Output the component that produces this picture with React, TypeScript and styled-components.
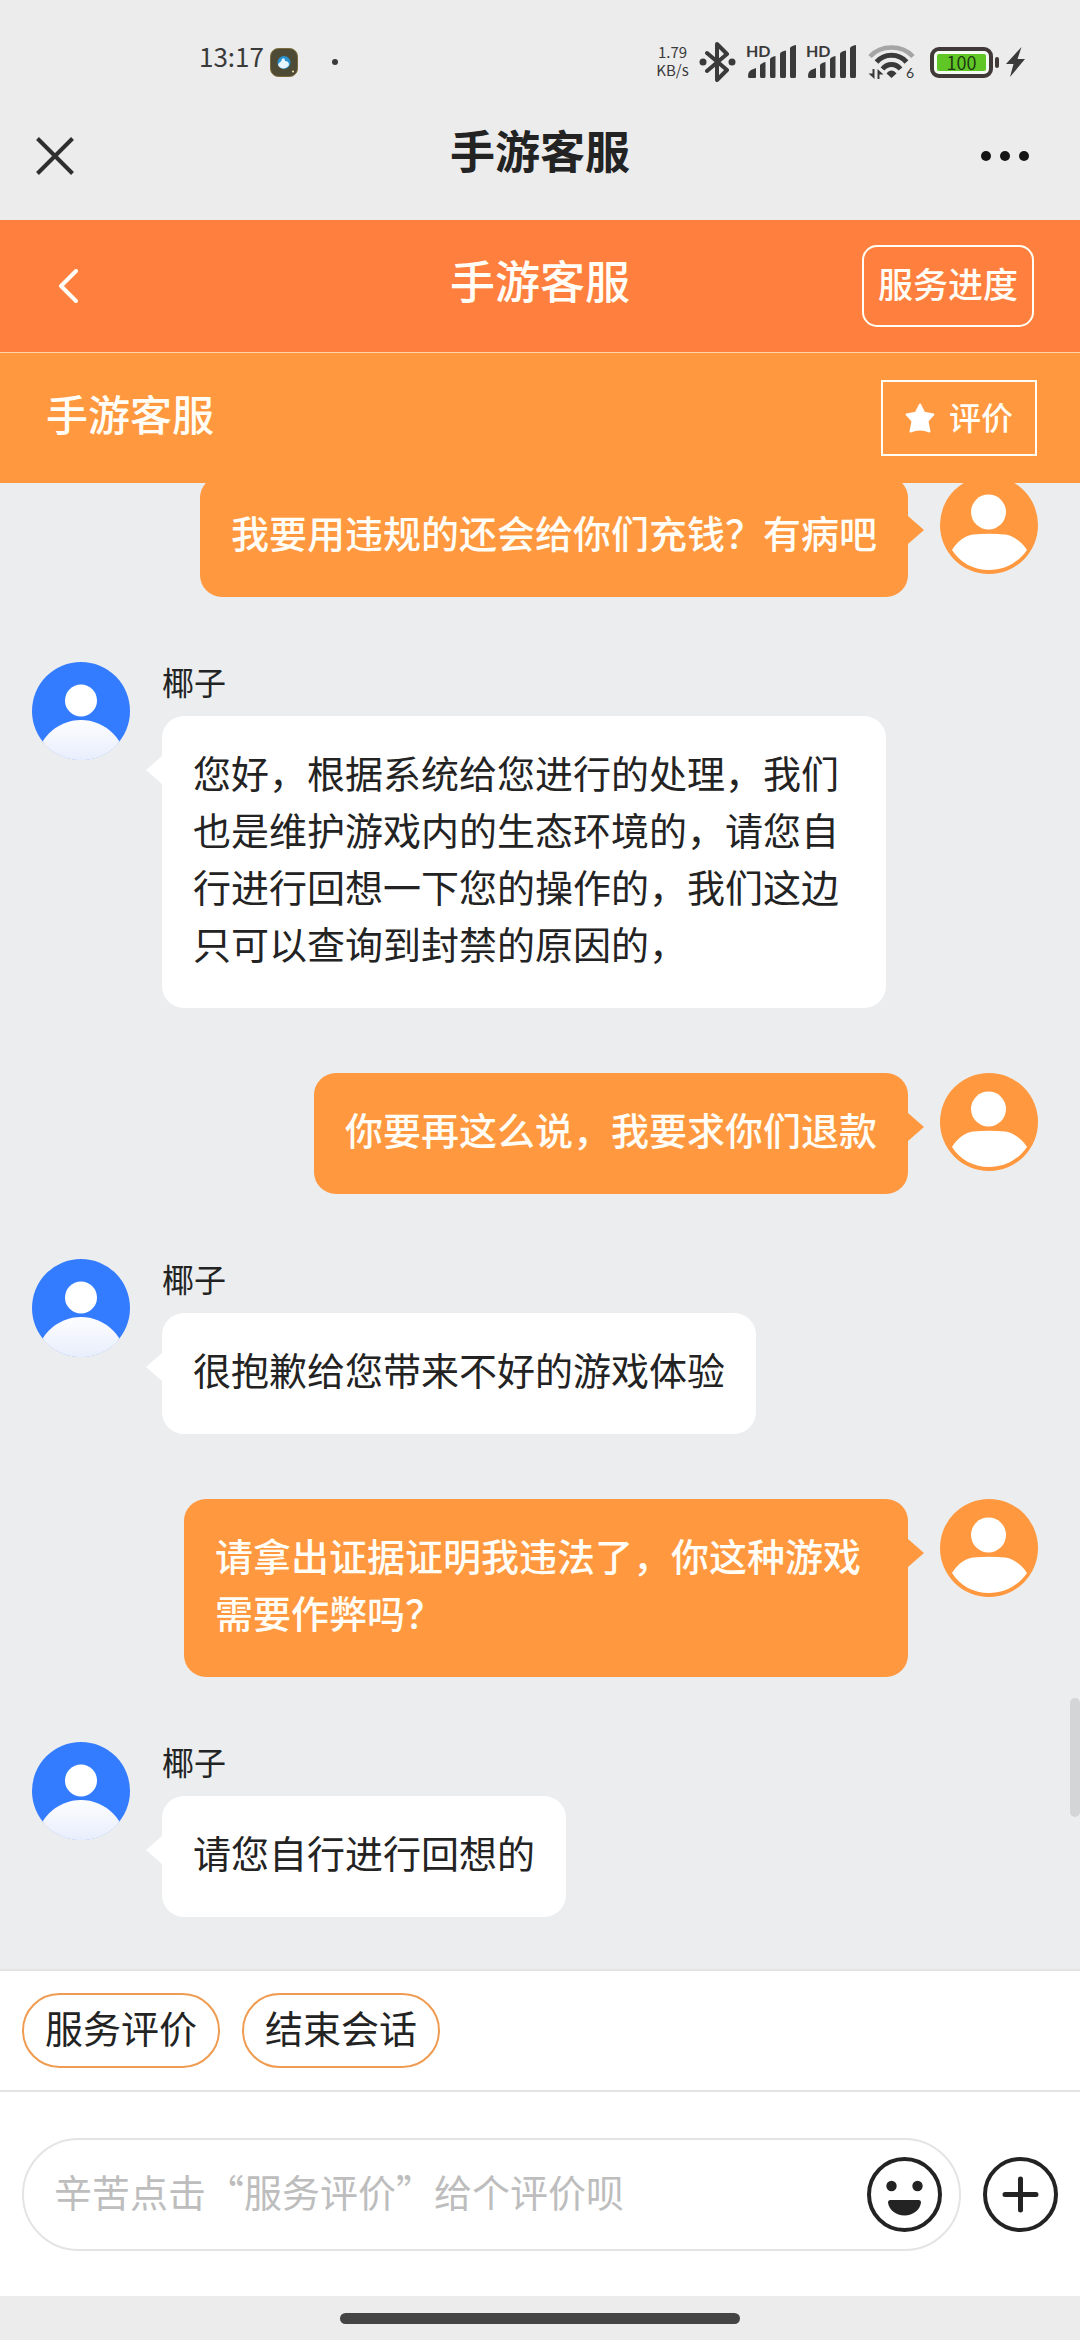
import React from "react";
import styled, { createGlobalStyle } from "styled-components";

const color = {
  system: "#ececec",
  ink: "#232323",
  coral: "#ff803e",
  orange: "#ff983e",
  cream: "#fffdf5",
  chat: "#ebedef",
  line: "#e4e4e4",
  blue: "#337cff",
};

const GlobalStyle = createGlobalStyle`
  *, *::before, *::after { box-sizing: border-box; }
  body {
    margin: 0;
    background: ${color.system};
    color: ${color.ink};
    font-family: "Noto Sans CJK SC", "Noto Sans", sans-serif;
  }
  button, input { font: inherit; color: inherit; }
  svg { display: block; }
`;

const Page = styled.div`
  display: flex;
  flex-direction: column;
  height: 100vh;
`;

/* ---------- system status bar ---------- */

const StatusBar = styled.div`
  display: flex;
  flex: none;
  justify-content: space-between;
  height: 91px;
  padding: 33px 55px 0 199px;
  color: #3a3a3a;
`;

const StatusGroup = styled.div`
  display: flex;
  align-items: center;
  gap: 10px;
`;

const Clock = styled.time`
  width: 61px;
  margin-bottom: 12px;
  font-size: 26px;
  line-height: 46px;
  font-weight: 400;
`;

const Dot = styled.span`
  width: 6px;
  height: 6px;
  margin-left: 24px;
  border-radius: 50%;
  background: currentColor;
`;

const Speed = styled.div`
  width: 33px;
  margin-bottom: 2px;
  font-size: 15px;
  line-height: 18px;
  text-align: center;
`;

const Power = styled.div`
  display: flex;
  align-items: center;
  gap: 7px;
`;

const Battery = styled.div`
  display: flex;
  align-items: center;
  gap: 2px;

  &::after {
    content: "";
    width: 4px;
    height: 11px;
    border-radius: 2px;
    background: #413838;
  }
`;

const BatteryShell = styled.div`
  width: 63px;
  height: 31px;
  padding: 3px;
  border: 4px solid #413838;
  border-radius: 9px;
  background: #f4fbf0;
`;

const BatteryFill = styled.div`
  height: 100%;
  border-radius: 2px;
  background: #5fc626;
  color: #1f3a12;
  font-size: 18px;
  line-height: 16px;
  text-align: center;
`;

/* ---------- headers ---------- */

const BareButton = styled.button<{ $width: number }>`
  display: grid;
  place-items: center;
  flex: none;
  width: ${(p) => p.$width}px;
  height: 75px;
  padding: 0;
  border: 0;
  background: none;
  cursor: pointer;
`;

const Bar = styled.header`
  display: grid;
  flex: none;
  grid-template-columns: 1fr auto 1fr;
  align-items: center;

  & > :last-child { justify-self: end; }
`;

const WindowBar = styled(Bar)`
  height: 129px;
  padding: 0 32px;
`;

const ServiceBar = styled(Bar)`
  height: 133px;
  padding: 0 46px;
  border-bottom: 1px solid #ffd3a6;
  background: ${color.coral};
  color: ${color.cream};
`;

const Title = styled.h1<{ $bold?: boolean }>`
  margin: 0;
  padding-bottom: 12px;
  font-size: 45px;
  line-height: 60px;
  font-weight: ${(p) => (p.$bold ? 700 : 500)};
`;

const ProgressButton = styled.button`
  height: 82px;
  padding: 0 14px 6px;
  border: 2px solid ${color.cream};
  border-radius: 15px;
  background: none;
  font-size: 35px;
  line-height: 50px;
  font-weight: 500;
  cursor: pointer;
`;

const QueueBar = styled.div`
  display: flex;
  flex: none;
  align-items: center;
  justify-content: space-between;
  height: 130px;
  padding: 0 43px 0 46px;
  background: ${color.orange};
  color: ${color.cream};
`;

const QueueName = styled.h2`
  margin: 0;
  padding-bottom: 10px;
  font-size: 42px;
  line-height: 60px;
  font-weight: 500;
`;

const RateButton = styled.button`
  display: flex;
  align-items: center;
  gap: 14px;
  height: 76px;
  padding: 0 22px;
  border: 2px solid ${color.cream};
  background: none;
  font-size: 32px;
  line-height: 46px;
  font-weight: 500;
  cursor: pointer;
`;

const RateLabel = styled.span`
  padding-bottom: 4px;
`;

/* ---------- conversation ---------- */

const ChatPane = styled.main`
  position: relative;
  flex: 1;
  min-height: 0;
  background: ${color.chat};
`;

const ChatScroll = styled.div`
  display: flex;
  flex-direction: column-reverse;
  height: 100%;
  overflow-y: auto;
  scrollbar-width: none;
`;

const ScrollThumb = styled.div`
  position: absolute;
  right: 0;
  bottom: 152px;
  width: 10px;
  height: 119px;
  border-radius: 5px;
  background: #d3d5d7;
`;

const MessageList = styled.ul`
  display: flex;
  flex: none;
  flex-direction: column;
  gap: 65px;
  margin: 0;
  padding: 0 42px 52px 32px;
  list-style: none;
`;

const MessageRow = styled.li<{ $mine: boolean }>`
  display: flex;
  flex-direction: ${(p) => (p.$mine ? "row-reverse" : "row")};
  align-items: flex-start;
  gap: 32px;
`;

const Sender = styled.div`
  margin-bottom: 16px;
  font-size: 32px;
  line-height: 38px;
`;

const Bubble = styled.p<{ $mine: boolean }>`
  position: relative;
  max-width: 724px;
  margin: 0;
  padding: 27px 31px 37px;
  border-radius: 22px;
  background: ${(p) => (p.$mine ? color.orange : "#fff")};
  color: ${(p) => (p.$mine ? color.cream : color.ink)};
  font-size: 38px;
  line-height: 57px;
  font-weight: ${(p) => (p.$mine ? 500 : 400)};

  &::before {
    content: "";
    position: absolute;
    top: 40px;
    ${(p) => (p.$mine ? "left" : "right")}: 100%;
    border: 14px solid transparent;
    border-${(p) => (p.$mine ? "left" : "right")}: 16px solid
      ${(p) => (p.$mine ? color.orange : "#fff")};
    border-${(p) => (p.$mine ? "right" : "left")}: 0;
  }
`;

/* ---------- bottom controls ---------- */

const QuickActions = styled.nav`
  display: flex;
  flex: none;
  gap: 22px;
  padding: 22px;
  border-top: 2px solid ${color.line};
  background: #fff;
`;

const Chip = styled.button`
  height: 75px;
  padding: 0 21px 8px;
  border: 2px solid #ef9c52;
  border-radius: 38px;
  background: #fff;
  font-size: 38px;
  line-height: 57px;
  cursor: pointer;
`;

const Composer = styled.form`
  display: flex;
  flex: none;
  align-items: center;
  gap: 22px;
  padding: 46px 22px 45px;
  border-top: 2px solid ${color.line};
  background: #fff;
`;

const Field = styled.div`
  display: flex;
  flex: 1;
  align-items: center;
  height: 113px;
  padding: 0 17px 0 30px;
  border: 2px solid ${color.line};
  border-radius: 57px;
`;

const TextInput = styled.input`
  flex: 1;
  min-width: 0;
  padding: 0 0 8px;
  border: 0;
  outline: 0;
  background: none;
  font-size: 38px;
  line-height: 57px;

  &::placeholder { color: #bdbdbd; opacity: 1; }
`;

const GestureArea = styled.div`
  display: flex;
  flex: none;
  justify-content: center;
  height: 44px;
  padding-top: 17px;
`;

const GestureHandle = styled.div`
  width: 37%;
  height: 11px;
  border-radius: 6px;
  background: #444;
`;

/* ---------- drawings ---------- */

const AppBadge = () => (
  <svg width="28" height="29" viewBox="0 0 28 29" aria-hidden="true">
    <rect x="0.5" y="0.5" width="27" height="28" rx="8" fill="#4d4a35" stroke="#7c6a3c" />
    <circle cx="14" cy="14.5" r="6.5" fill="#2a93d0" />
    <path d="M8 17c1-3 3-2 4-6 2-2 3 0 3 2 3 0 4 2 4 4-2 4-9 5-11 0z" fill="#e6f6ff" />
    <circle cx="23" cy="23.500" r="1" fill="#fff4b8" />
  </svg>
);

const BluetoothIcon = () => (
  <svg width="37" height="40" viewBox="0 0 37 40" fill="none" stroke="currentColor" strokeWidth="4" strokeLinejoin="round" strokeLinecap="round" aria-hidden="true">
    <path d="M8 11l20 17-10 10V2l10 10L8 29" />
    <circle cx="4" cy="20" r="3.500" fill="currentColor" stroke="none" />
    <circle cx="33" cy="20" r="3.500" fill="currentColor" stroke="none" />
  </svg>
);

const SignalIcon = () => (
  <svg width="50" height="46" viewBox="0 -6 50 46" fill="currentColor" aria-hidden="true">
    <text x="0" y="12" fontSize="16" fontWeight="700" fontFamily="Lato, sans-serif">HD</text>
    <path d="M2 31q0-4 3-6l5-2v9q0 1-1 1H3q-1 0-1-2z" />
    <path d="M14 20q1-2 5.500-3v14q0 2-1 2h-3.500q-1 0-1-2z" />
    <path d="M24 14q1-2 5.500-3v20q0 2-1 2h-3.500q-1 0-1-2z" />
    <path d="M34 8.500q1-2 6-3v25.500q0 2-1 2h-4q-1 0-1-2z" />
    <path d="M44 3q1-2 6-3v31q0 2-1 2h-4q-1 0-1-2z" />
  </svg>
);

const WifiIcon = () => (
  <svg width="54" height="40" viewBox="0 -2 54 40" fill="none" stroke="currentColor" aria-hidden="true">
    <path d="M4 12.500c11-12 32-12 43 0" stroke="#a5a5a5" strokeWidth="4.500" />
    <path d="M10.500 18c8-9 22-9 30 0" strokeWidth="5" />
    <path d="M16.500 25c5-6 13-6 18 0" strokeWidth="5" />
    <path d="M20.500 29.500c3-4 7-4 10 0L25.500 34z" fill="currentColor" stroke="none" />
    <path d="M8.500 25v10l-6-5.500h4V25zM11.500 35V25l6 5.500h-4V35z" fill="currentColor" stroke="none" />
    <text x="40" y="34" fontSize="14" fill="currentColor" stroke="none" fontFamily="Lato, sans-serif">6</text>
  </svg>
);

const BoltIcon = () => (
  <svg width="19" height="30" viewBox="0 0 19 30" fill="currentColor" aria-hidden="true">
    <path d="M15.500 0L0 17h7.500L4 30 19 12h-7.500z" />
  </svg>
);

const CloseIcon = () => (
  <svg width="38" height="38" viewBox="0 0 38 38" fill="none" stroke="#2e2e2e" strokeWidth="4" aria-hidden="true">
    <path d="M1.500 1.500l35 35M36.500 1.500l-35 35" />
  </svg>
);

const MoreIcon = () => (
  <svg width="50" height="12" viewBox="0 0 50 12" fill="#151515" aria-hidden="true">
    <circle cx="6" cy="6" r="5" />
    <circle cx="25" cy="6" r="5" />
    <circle cx="44" cy="6" r="5" />
  </svg>
);

const BackIcon = () => (
  <svg width="20" height="34" viewBox="0 0 20 34" fill="none" stroke="currentColor" strokeWidth="4" strokeLinecap="round" strokeLinejoin="round" aria-hidden="true">
    <path d="M18 2L3 17l15 15" />
  </svg>
);

const StarIcon = () => (
  <svg width="30" height="30" viewBox="0 0 30 30" fill="#fff" stroke="#fff" strokeWidth="2" strokeLinejoin="round" aria-hidden="true">
    <path d="M15 1.500l4.200 8.200 9.300 1.700-6 6.800 2 10.300q-9.500-4-19 0L7.500 18.200 1.500 11.400l9.300-1.700z" />
  </svg>
);

const AgentAvatar = ({ id }: { id: string }) => (
  <svg width="98" height="98" viewBox="0 0 98 98" role="img" aria-label="客服头像">
    <defs>
      <linearGradient id={`body-${id}`} x1="0" y1="58" x2="0" y2="98" gradientUnits="userSpaceOnUse">
        <stop offset="0" stopColor="#fdfdff" />
        <stop offset="1" stopColor="#e8eefc" />
      </linearGradient>
      <clipPath id={`disc-${id}`}>
        <circle cx="49" cy="49" r="49" />
      </clipPath>
    </defs>
    <g clipPath={`url(#disc-${id})`}>
      <rect width="98" height="98" fill={color.blue} />
      <circle cx="49" cy="103" r="45" fill={`url(#body-${id})`} />
      <rect y="81" width="98" height="17" fill={`url(#body-${id})`} />
    </g>
    <circle cx="49" cy="38.500" r="16" fill="#fff" />
  </svg>
);

const UserAvatar = () => (
  <svg width="98" height="98" viewBox="0 0 98 98" role="img" aria-label="我的头像">
    <circle cx="49" cy="49" r="49" fill={color.orange} />
    <circle cx="48.500" cy="36" r="17.500" fill="#fff" />
    <path d="M12 74C18 64 27 59 33 58.500Q49 57 65 58.500C72 59 81 65 87 74 78 87 64 94 49 94S20 87 12 74z" fill="#fff" />
  </svg>
);

const SmileIcon = () => (
  <svg width="75" height="75" viewBox="0 0 75 75" fill={color.ink} aria-hidden="true">
    <circle cx="37.500" cy="37.500" r="35.500" fill="none" stroke={color.ink} strokeWidth="4" />
    <circle cx="24.500" cy="29" r="5.200" />
    <circle cx="50.500" cy="29" r="5.200" />
    <path d="M23 43h29q2 0 2 2.500C53 53 46 58.500 37.500 58.500S22 53 21 45.500Q21 43 23 43z" />
  </svg>
);

const PlusIcon = () => (
  <svg width="75" height="75" viewBox="0 0 75 75" fill="none" stroke={color.ink} strokeLinecap="round" aria-hidden="true">
    <circle cx="37.500" cy="37.500" r="35.500" strokeWidth="4" />
    <path d="M22 37.500h31M37.500 22v31" strokeWidth="5" />
  </svg>
);

/* ---------- content ---------- */

type Message = { mine: boolean; text: string };

const agentName = "椰子";

const messages: Message[] = [
  { mine: true, text: "我要用违规的还会给你们充钱？有病吧" },
  {
    mine: false,
    text: "您好，根据系统给您进行的处理，我们也是维护游戏内的生态环境的，请您自行进行回想一下您的操作的，我们这边只可以查询到封禁的原因的，",
  },
  { mine: true, text: "你要再这么说，我要求你们退款" },
  { mine: false, text: "很抱歉给您带来不好的游戏体验" },
  { mine: true, text: "请拿出证据证明我违法了，你这种游戏需要作弊吗？" },
  { mine: false, text: "请您自行进行回想的" },
];

export default function App() {
  return (
    <Page lang="zh-CN">
      <GlobalStyle />

      <StatusBar>
        <StatusGroup>
          <Clock>13:17</Clock>
          <AppBadge />
          <Dot />
        </StatusGroup>
        <StatusGroup>
          <Speed>
            <div>1.79</div>
            <div>KB/s</div>
          </Speed>
          <BluetoothIcon />
          <SignalIcon />
          <SignalIcon />
          <WifiIcon />
          <Power>
            <Battery>
              <BatteryShell>
                <BatteryFill>100</BatteryFill>
              </BatteryShell>
            </Battery>
            <BoltIcon />
          </Power>
        </StatusGroup>
      </StatusBar>

      <WindowBar>
        <BareButton type="button" $width={46} aria-label="关闭">
          <CloseIcon />
        </BareButton>
        <Title $bold>手游客服</Title>
        <BareButton type="button" $width={86} aria-label="更多">
          <MoreIcon />
        </BareButton>
      </WindowBar>

      <ServiceBar>
        <BareButton type="button" $width={44} aria-label="返回">
          <BackIcon />
        </BareButton>
        <Title as="div">手游客服</Title>
        <ProgressButton type="button">服务进度</ProgressButton>
      </ServiceBar>

      <QueueBar>
        <QueueName>手游客服</QueueName>
        <RateButton type="button">
          <StarIcon />
          <RateLabel>评价</RateLabel>
        </RateButton>
      </QueueBar>

      <ChatPane>
        <ChatScroll>
          <MessageList>
            {messages.map((message, index) => (
              <MessageRow key={index} $mine={message.mine}>
                {message.mine ? <UserAvatar /> : <AgentAvatar id={String(index)} />}
                <div>
                  {!message.mine && <Sender>{agentName}</Sender>}
                  <Bubble $mine={message.mine}>{message.text}</Bubble>
                </div>
              </MessageRow>
            ))}
          </MessageList>
        </ChatScroll>
        <ScrollThumb />
      </ChatPane>

      <QuickActions>
        <Chip type="button">服务评价</Chip>
        <Chip type="button">结束会话</Chip>
      </QuickActions>

      <Composer onSubmit={(event) => event.preventDefault()}>
        <Field>
          <TextInput type="text" aria-label="消息" placeholder="辛苦点击“服务评价”给个评价呗" />
          <BareButton type="button" $width={75} aria-label="表情">
            <SmileIcon />
          </BareButton>
        </Field>
        <BareButton type="button" $width={75} aria-label="更多功能">
          <PlusIcon />
        </BareButton>
      </Composer>

      <GestureArea>
        <GestureHandle />
      </GestureArea>
    </Page>
  );
}
